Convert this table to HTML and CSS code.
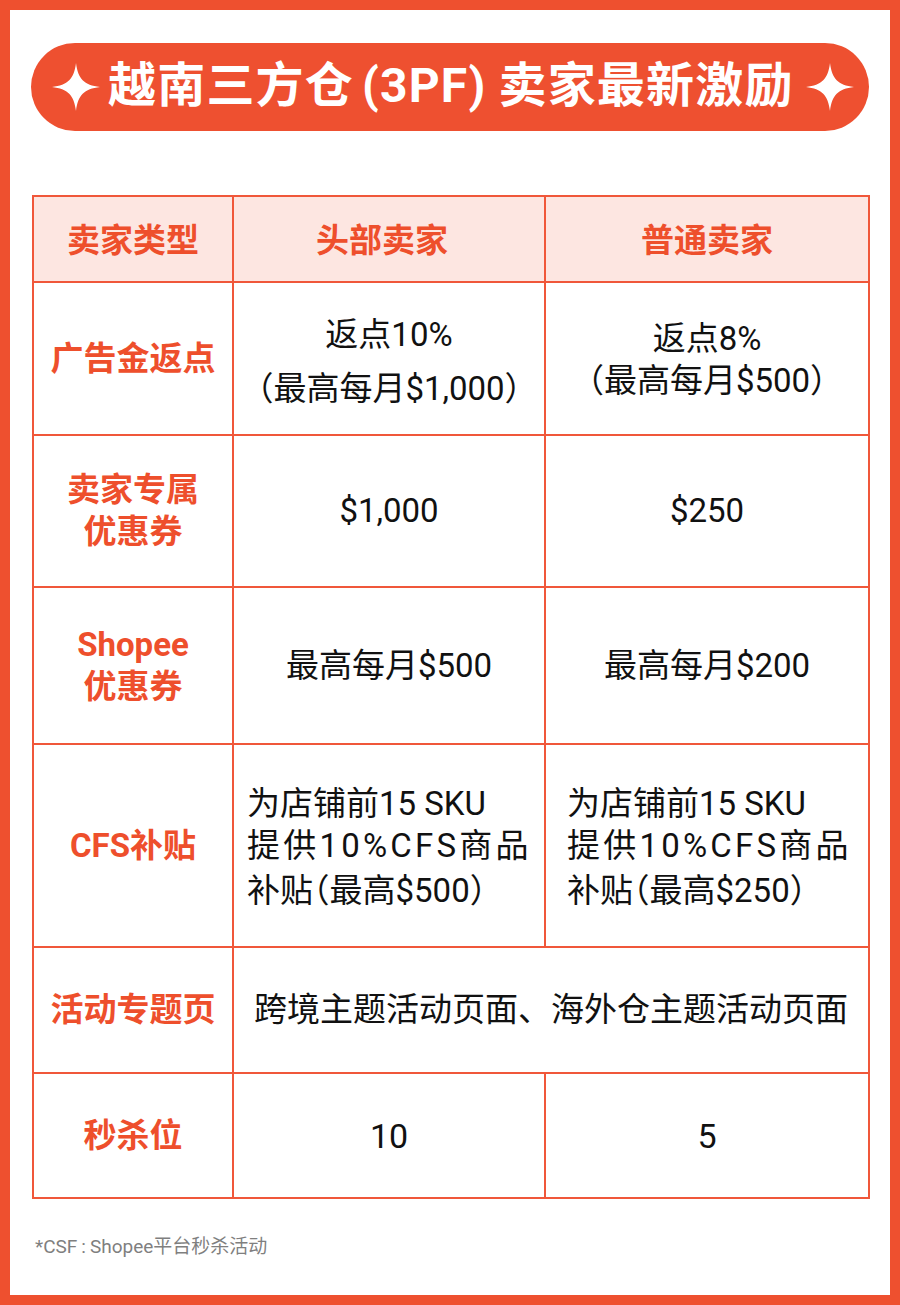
FILE: index.html
```html
<!DOCTYPE html>
<html lang="zh-CN">
<head>
<meta charset="utf-8">
<title>越南三方仓(3PF)卖家最新激励</title>
<link rel="stylesheet" href="styles.css">
</head>
<body>
<div class="frame">
  <div class="title">
    <svg class="star" viewBox="0 0 48 48" width="48" height="48"><path d="M24 0 C26 16 32 22 48 24 C32 26 26 32 24 48 C22 32 16 26 0 24 C16 22 22 16 24 0Z" fill="#fff"/></svg>
    <h1 class="title-text">越南三方仓<span class="paren">(3PF)</span>卖家最新激励</h1>
    <svg class="star" viewBox="0 0 48 48" width="48" height="48"><path d="M24 0 C26 16 32 22 48 24 C32 26 26 32 24 48 C22 32 16 26 0 24 C16 22 22 16 24 0Z" fill="#fff"/></svg>
  </div>

  <table class="grid">
    <colgroup>
      <col class="c1"><col class="c2"><col class="c3">
    </colgroup>
    <tr class="head r0">
      <th>卖家类型</th><th class="h2">头部卖家</th><th>普通卖家</th>
    </tr>
    <tr class="r1">
      <th class="label">广告金返点</th>
      <td class="wide-cell"><div class="l1">返点10%</div><div class="l2 wide">（最高每月$1,000）</div></td>
      <td><div class="l1">返点8%</div><div class="l2">（最高每月$500）</div></td>
    </tr>
    <tr class="r2">
      <th class="label">卖家专属<br>优惠券</th>
      <td>$1,000</td>
      <td>$250</td>
    </tr>
    <tr class="r3">
      <th class="label">Shopee<br>优惠券</th>
      <td>最高每月$500</td>
      <td>最高每月$200</td>
    </tr>
    <tr class="r4">
      <th class="label">CFS补贴</th>
      <td class="left pad1"><div>为店铺前15 SKU</div><div class="spread">提供10%CFS商品</div><div>补贴<span class="half">（</span>最高$500<span class="half">）</span></div></td>
      <td class="left pad2"><div>为店铺前15 SKU</div><div class="spread">提供10%CFS商品</div><div>补贴<span class="half">（</span>最高$250<span class="half">）</span></div></td>
    </tr>
    <tr class="r5">
      <th class="label">活动专题页</th>
      <td colspan="2">跨境主题活动页面、海外仓主题活动页面</td>
    </tr>
    <tr class="r6">
      <th class="label">秒杀位</th>
      <td class="num">10</td>
      <td class="num">5</td>
    </tr>
  </table>

  <p class="note">*CSF<span class="colon">:</span>Shopee平台秒杀活动</p>
</div>
</body>
</html>
```

FILE: styles.css
```css
* { box-sizing: border-box; }

html, body {
  margin: 0;
  padding: 0;
  background: #ffffff;
}

body {
  font-family: Roboto, "Noto Sans CJK SC", sans-serif;
  color: #111111;
}

.frame {
  width: 900px;
  height: 1305px;
  border: 10px solid #ee502f;
  background: #ffffff;
  padding: 33px 22px 0 22px;
}

.title {
  margin: 0 -1px;
  height: 88px;
  border-radius: 44px;
  background: #ee5030;
  display: flex;
  align-items: center;
  justify-content: flex-start;
  gap: 8px;
  padding: 0 0 0 21px;
}

.star {
  flex: none;
  display: block;
}

.title-text {
  margin: 0 4px 2px 0;
  color: #ffffff;
  font-family: Roboto, "Noto Sans CJK SC", sans-serif;
  font-weight: 700;
  font-size: 48px;
  line-height: 56px;
  letter-spacing: 1.2px;
  white-space: nowrap;
}

.paren {
  margin: 0 12px 0 8px;
}

.grid {
  margin-top: 64px;
  width: 836px;
  border-collapse: collapse;
  table-layout: fixed;
  border: 2px solid #f0573a;
  text-spacing-trim: space-all;
}

.c1 { width: 200px; }
.c2 { width: 312px; }
.c3 { width: 324px; }

.grid th,
.grid td {
  border: 2px solid #f0573a;
  padding: 0;
  text-align: center;
  vertical-align: middle;
  font-size: 33px;
  line-height: 42px;
  font-weight: 400;
}

.grid th {
  color: #ee4f2c;
  font-weight: 700;
}

.head th {
  background: #fde6e1;
  padding-top: 4px;
}

.head th.h2 {
  padding-right: 14px;
}

.r0 { height: 86px; }
.r1 { height: 153px; }
.r2 { height: 152px; }
.r3 { height: 157px; }
.r4 { height: 203px; }
.r5 { height: 126px; }
.r6 { height: 125px; }

.r1 td { padding-top: 2px; }
.r1 td.wide-cell { padding-top: 6px; }
.r1 .l2.wide { margin-top: 12px; }

.grid td.left {
  text-align: left;
  padding-top: 3px;
}

.grid td.pad1 { padding-left: 13px; }
.grid td.pad2 { padding-left: 21px; }

.spread {
  letter-spacing: 3.2px;
}

.half {
  font-feature-settings: "halt";
  font-family: "Noto Sans CJK SC", sans-serif;
}

.grid td.num {
  font-size: 34px;
  padding-top: 0;
}

.note {
  margin: 36px 0 0 3px;
  font-size: 19px;
  line-height: 24px;
  color: #7f7f7f;
}

.colon {
  margin: 0 4px;
}
```
